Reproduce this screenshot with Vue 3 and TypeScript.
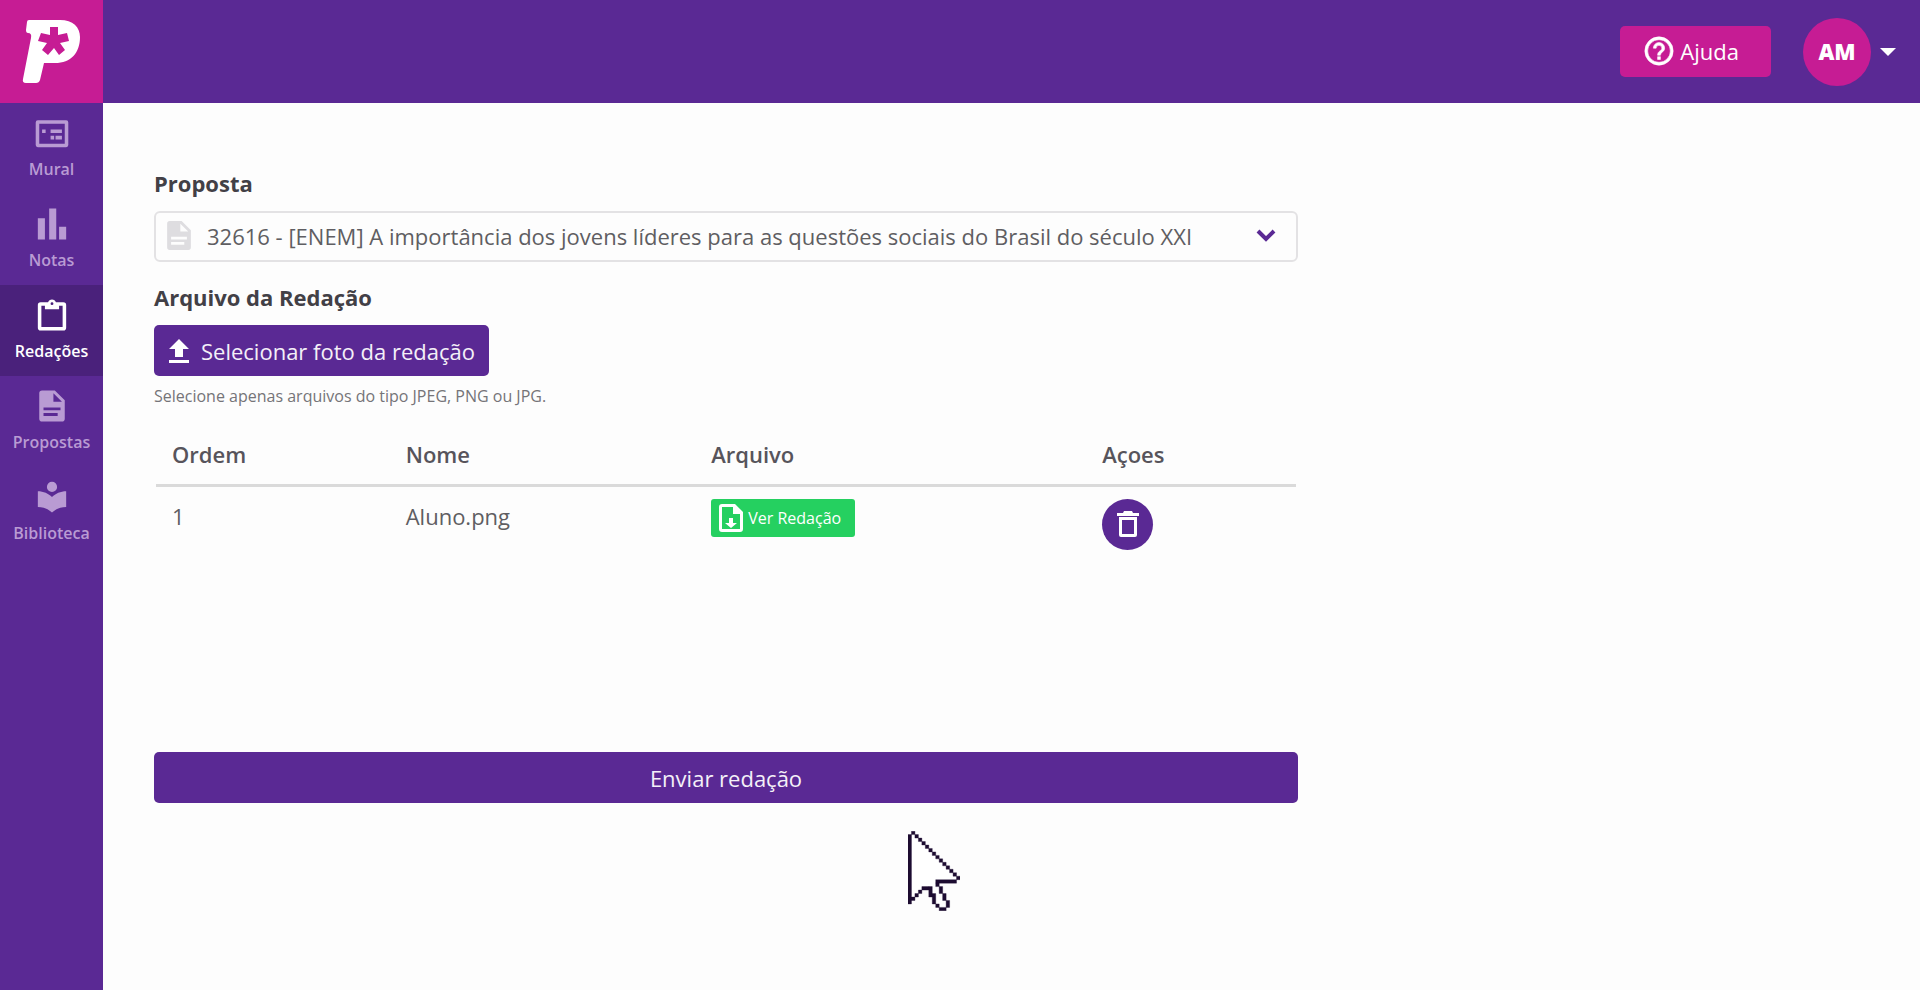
<script setup lang="ts">
import { ref } from 'vue'

interface NavItem {
  label: string
  icon: string
  active?: boolean
}

interface EssayFile {
  order: number
  name: string
}

const navItems: NavItem[] = [
  {
    label: 'Mural',
    icon: 'M12 14h2.500v2.500H12zM15.500 14H20v2.500h-4.500zM12 9.500h8V12h-8zM6 9.500h2.500V12H6zM23 3H3a1.500 1.500 0 0 0-1.500 1.500v16A1.500 1.500 0 0 0 3 22h20a1.500 1.500 0 0 0 1.500-1.500v-16A1.500 1.500 0 0 0 23 3zM4 19.500v-14h18v14H4z',
  },
  { label: 'Notas', icon: 'M3 8h5v15H3zM11 1h5v22h-5zM18 14h5v9h-5z' },
  {
    label: 'Redações',
    icon: 'M20 3h-4.200C15.400 1.800 14.300 1 13 1s-2.400.8-2.800 2H5a2 2 0 0 0-2 2v16a2 2 0 0 0 2 2h16a2 2 0 0 0 2-2V5a2 2 0 0 0-2-2zm-7 0a1 1 0 1 1 0 2 1 1 0 0 1 0-2zm7.500 17.500h-15V5.500H8V8h10V5.500h2.500z',
    active: true,
  },
  {
    label: 'Propostas',
    icon: 'M15 1H6a2 2 0 0 0-2 2v18a2 2 0 0 0 2 2h14a2 2 0 0 0 2-2V8l-7-7zm2 18H7v-2h10v2zm2-4H7v-2h12v2zm-5-6V3l6 6h-6z',
  },
  {
    label: 'Biblioteca',
    icon: 'M13 12C10.500 9.700 7 8 3 8v11c4 0 7.500 1.500 10 4 2.500-2.500 6-4 10-4V8c-4 0-7.500 1.700-10 4zM13 8.500a3.600 3.600 0 1 0 0-7.200 3.600 3.600 0 0 0 0 7.200z',
  },
]

const proposals: string[] = [
  '32616 - [ENEM] A importância dos jovens líderes para as questões sociais do Brasil do século XXI',
]
const selected = ref<string>(proposals[0])
const files = ref<EssayFile[]>([{ order: 1, name: 'Aluno.png' }])

function removeFile(order: number): void {
  files.value = files.value.filter((file) => file.order !== order)
}
</script>

<template>
  <div class="app">
    <aside class="sidebar">
      <a class="logo" href="#" aria-label="Início">
        <svg viewBox="0 0 103 103" aria-hidden="true">
          <path
            class="logo-mark"
            d="M29 20H60C73 20 80 27 80 37C80 53 71 63 55 63H44L40 80Q39 83 36 83H26Q22 83 23 79L31 38Q32 33 28 33Q26 33 26 30L27 22Q27 20 29 20Z"
          />
          <path
            class="logo-star"
            d="M50 27H58V35L67 33L69 41L60 43L65 50L59 55L54 48L48 55L42 50L47 43L38 41L41 33L50 35Z"
          />
        </svg>
      </a>
      <nav class="nav">
        <a
          v-for="item in navItems"
          :key="item.label"
          href="#"
          class="nav-item"
          :class="{ active: item.active }"
        >
          <svg viewBox="1 0 24 24" aria-hidden="true">
            <path :d="item.icon" fill-rule="evenodd" />
          </svg>
          <span>{{ item.label }}</span>
        </a>
      </nav>
    </aside>

    <div class="body">
      <header class="topbar">
        <button type="button" class="help">
          <svg viewBox="0 0 24 24" aria-hidden="true">
            <path
              d="M11 18h2v-2h-2v2zm1-16a10 10 0 1 0 0 20 10 10 0 0 0 0-20zm0 18a8 8 0 1 1 0-16 8 8 0 0 1 0 16zm0-14a4 4 0 0 0-4 4h2a2 2 0 1 1 4 0c0 2-3 1.750-3 5h2c0-2.250 3-2.500 3-5a4 4 0 0 0-4-4z"
            />
          </svg>
          Ajuda
        </button>
        <button type="button" class="account" aria-label="Conta">
          <span class="avatar">AM</span>
          <svg class="caret" viewBox="0 0 16 8" aria-hidden="true"><path d="M0 0h16L8 8z" /></svg>
        </button>
      </header>

      <main class="content">
        <form class="form" @submit.prevent>
          <label class="label" for="proposal">Proposta</label>
          <div class="select-box">
            <svg class="doc" viewBox="4 1 18 22" aria-hidden="true">
              <path :d="navItems[3].icon" fill-rule="evenodd" />
            </svg>
            <select id="proposal" v-model="selected">
              <option v-for="proposal in proposals" :key="proposal">{{ proposal }}</option>
            </select>
            <svg class="chevron" viewBox="0 0 20 14" aria-hidden="true">
              <path d="M2 2l8 8 8-8" />
            </svg>
          </div>

          <span id="file-label" class="label file-label">Arquivo da Redação</span>
          <button type="button" class="primary upload" aria-describedby="file-label">
            <svg viewBox="0 0 20 24" aria-hidden="true">
              <path d="M6 18h8v-8h6L10 0 0 10h6zM0 21h20v3H0z" />
            </svg>
            Selecionar foto da redação
          </button>
          <p class="hint">Selecione apenas arquivos do tipo JPEG, PNG ou JPG.</p>

          <div class="table-area">
            <table>
              <thead>
                <tr>
                  <th class="col-order">Ordem</th>
                  <th class="col-name">Nome</th>
                  <th class="col-file">Arquivo</th>
                  <th>Açoes</th>
                </tr>
              </thead>
              <tbody>
                <tr v-for="file in files" :key="file.order">
                  <td>{{ file.order }}</td>
                  <td>{{ file.name }}</td>
                  <td>
                    <button type="button" class="view">
                      <svg viewBox="0 0 24 28" aria-hidden="true">
                        <path
                          fill-rule="evenodd"
                          d="M3 0h13l8 8v17a3 3 0 0 1-3 3H3a3 3 0 0 1-3-3V3a3 3 0 0 1 3-3zM3 3v22h18V10h-7V3zM10 14h4v5h4l-6 5-6-5h4z"
                        />
                      </svg>
                      Ver Redação
                    </button>
                  </td>
                  <td>
                    <button
                      type="button"
                      class="delete"
                      aria-label="Excluir"
                      @click="removeFile(file.order)"
                    >
                      <svg viewBox="0 0 22 26" aria-hidden="true">
                        <path
                          fill-rule="evenodd"
                          d="M7 0h8l1 2h6v3H0V2h6zM2 6h18v18a2 2 0 0 1-2 2H4a2 2 0 0 1-2-2zM5 9v14h12V9z"
                        />
                      </svg>
                    </button>
                  </td>
                </tr>
              </tbody>
            </table>
          </div>

          <button type="submit" class="primary submit">Enviar redação</button>
        </form>
      </main>
    </div>

    <svg class="pointer" viewBox="0 0 15 23" aria-hidden="true">
      <path
        class="pointer-fill"
        d="M1 1h1v1h1v1h1v1h1v1h1v1h1v1h1v1h1v1h1v1h1v1h1v1h1v1h1v1h1v1H8v2h1v2h1v2h1v2H9v-1H8v-3H7v-2H4v1H3v1H2v1H1z"
      />
      <path
        class="pointer-line"
        d="M1 0h1v1H1zM0 1h1v20H0zM2 1h1v1H2zM3 2h1v1H3zM4 3h1v1H4zM5 4h1v1H5zM6 5h1v1H6zM7 6h1v1H7zM8 7h1v1H8zM9 8h1v1H9zM10 9h1v1h-1zM11 10h1v1h-1zM12 11h1v1h-1zM13 12h1v1h-1zM14 13h1v1h-1zM8 14h6v1H8zM8 15h1v1H8zM9 16h1v2H9zM10 18h1v2h-1zM11 20h1v2h-1zM9 22h2v1H9zM8 21h1v1H8zM7 18h1v3H7zM6 16h1v3H6zM4 16h2v1H4zM3 17h1v1H3zM2 18h1v1H2zM1 19h1v1H1z"
      />
    </svg>
  </div>
</template>

<style>
body {
  margin: 0;
  background: #fdfdfd;
}
</style>

<style scoped>
.app {
  position: relative;
  display: flex;
  min-height: 100vh;
  color: #5f5e62;
  font-family: "Segoe UI", "Open Sans", "Noto Sans", sans-serif;
  font-size: 22px;
  line-height: 30px;
}

.app *,
.app {
  box-sizing: border-box;
}

button,
select {
  border: 0;
  padding: 0;
  color: inherit;
  background: none;
  font: inherit;
  cursor: pointer;
}

svg {
  flex: none;
  fill: currentColor;
}

.sidebar {
  flex: none;
  width: 103px;
  background: #5a2994;
}

.logo {
  display: block;
  height: 103px;
  background: #c61c94;
}

.logo svg {
  display: block;
}

.logo-mark {
  fill: #fff;
}

.logo-star {
  fill: #c61c94;
}

.nav-item {
  display: flex;
  flex-direction: column;
  align-items: center;
  gap: 8px;
  height: 91px;
  padding-top: 13px;
  color: #b99bd3;
  font-size: 16px;
  font-weight: 600;
  line-height: 22px;
  text-decoration: none;
}

.nav-item svg {
  width: 34px;
  height: 34px;
}

.nav-item.active {
  color: #fff;
  background: #4a217b;
}

.body {
  flex: 1;
  min-width: 0;
}

.topbar {
  display: flex;
  align-items: center;
  justify-content: flex-end;
  gap: 32px;
  height: 103px;
  padding-right: 24px;
  background: #5a2994;
  color: #fff;
}

.help {
  display: flex;
  align-items: center;
  gap: 4px;
  height: 51px;
  padding: 0 32px 2px 22px;
  border-radius: 5px;
  background: #c61c94;
}

.help svg {
  width: 34px;
  height: 34px;
  stroke: currentColor;
  stroke-width: 0.4;
}

.account {
  display: flex;
  align-items: center;
  gap: 9px;
}

.avatar {
  display: grid;
  place-items: center;
  width: 68px;
  height: 68px;
  padding-bottom: 2px;
  border-radius: 50%;
  background: #c61c94;
  font-weight: 800;
}

.caret {
  width: 16px;
  height: 8px;
}

.content {
  display: grid;
  grid-template-columns: 2fr 1fr;
  padding: 65px 50px 65px 51px;
}

.form {
  display: flex;
  flex-direction: column;
  min-width: 0;
}

.label {
  color: #424046;
  font-size: 22px;
  font-weight: 700;
}

.select-box {
  display: grid;
  grid-template-columns: 24px 1fr 20px;
  align-items: center;
  gap: 16px;
  height: 51px;
  margin-top: 13px;
  padding: 0 20px 2px 11px;
  border: 2px solid #e3e2e4;
  border-radius: 6px;
}

.doc {
  width: 24px;
  height: 29px;
  color: #dedde0;
}

.select-box select {
  appearance: none;
  min-width: 0;
  height: 45px;
}

.chevron {
  width: 20px;
  height: 14px;
  fill: none;
  stroke: #5a2994;
  stroke-width: 4;
}

.file-label {
  margin-top: 20px;
}

.primary {
  height: 51px;
  border-radius: 5px;
  background: #5a2994;
  color: #f4f0f8;
}

.upload {
  display: flex;
  align-items: center;
  align-self: flex-start;
  gap: 12px;
  margin-top: 13px;
  padding: 0 14px 0 15px;
}

.upload svg {
  width: 20px;
  height: 24px;
  color: #fff;
}

.hint {
  margin: 9px 0 0;
  color: #757478;
  font-size: 16px;
  line-height: 22px;
}

.table-area {
  min-height: 325px;
  margin-top: 20px;
  padding: 0 2px;
}

table {
  width: 100%;
  table-layout: fixed;
  border-collapse: collapse;
}

th,
td {
  padding: 0 0 0 16px;
  text-align: left;
  vertical-align: top;
}

th {
  height: 58px;
  padding-top: 12px;
  border-bottom: 3px solid #dadada;
  color: #57545b;
  font-weight: 600;
}

td {
  padding-top: 14px;
}

td:has(button) {
  padding-top: 12px;
}

.col-order {
  width: 20.5%;
}

.col-name {
  width: 26.8%;
}

.col-file {
  width: 34.3%;
}

.view {
  display: flex;
  align-items: center;
  gap: 5px;
  height: 38px;
  padding: 0 14px 0 8px;
  border-radius: 3px;
  background: #25d060;
  color: #fff;
  font-size: 16px;
}

.view svg {
  width: 24px;
  height: 28px;
}

.delete {
  display: grid;
  place-items: center;
  width: 51px;
  height: 51px;
  border-radius: 50%;
  background: #5a2994;
  color: #fff;
}

.delete svg {
  width: 22px;
  height: 26px;
}

.pointer {
  position: absolute;
  top: 831px;
  left: 908px;
  width: 52px;
  height: 80px;
  pointer-events: none;
}

.pointer-fill {
  fill: #fff;
}

.pointer-line {
  fill: #1d0c31;
  stroke: #1d0c31;
  stroke-width: 0.1;
}
</style>
